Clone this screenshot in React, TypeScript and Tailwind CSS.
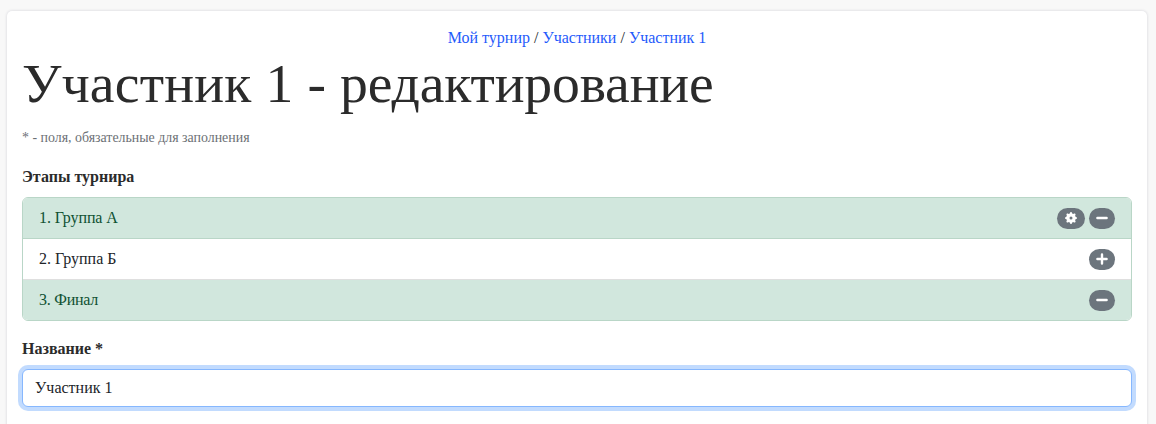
import React from "react";

const Gear = () => (
  <svg width="12" height="12" viewBox="0 0 16 16" fill="currentColor">
    <path d="M9.405 1.05c-.413-1.4-2.397-1.4-2.81 0l-.1.34a1.464 1.464 0 0 1-2.105.872l-.31-.17c-1.283-.698-2.686.705-1.987 1.987l.169.311c.446.82.023 1.841-.872 2.105l-.34.1c-1.4.413-1.4 2.397 0 2.81l.34.1a1.464 1.464 0 0 1 .872 2.105l-.17.31c-.698 1.283.705 2.686 1.987 1.987l.311-.169a1.464 1.464 0 0 1 2.105.872l.1.34c.413 1.4 2.397 1.4 2.81 0l.1-.34a1.464 1.464 0 0 1 2.105-.872l.31.17c1.283.698 2.686-.705 1.987-1.987l-.169-.311a1.464 1.464 0 0 1 .872-2.105l.34-.1c1.4-.413 1.4-2.397 0-2.81l-.34-.1a1.464 1.464 0 0 1-.872-2.105l.17-.31c.698-1.283-.705-2.686-1.987-1.987l-.311.169a1.464 1.464 0 0 1-2.105-.872l-.1-.34zM8 10a2 2 0 1 1 0-4 2 2 0 0 1 0 4z" />
  </svg>
);
const Minus = () => (
  <svg width="14" height="14" viewBox="0 0 14 14"><path d="M2.4 7h9.2" stroke="currentColor" strokeWidth="2.4" strokeLinecap="round" /></svg>
);
const Plus = () => (
  <svg width="14" height="14" viewBox="0 0 14 14"><path d="M2.4 7h9.2M7 2.4v9.2" stroke="currentColor" strokeWidth="2.4" strokeLinecap="round" /></svg>
);

const Pill = ({ children, wide }: { children: React.ReactNode; wide?: boolean }) => (
  <span className={wide ? "flex h-[21px] w-[28px] items-center justify-center rounded-[10.5px] bg-[#6c757d] text-white" : "flex h-[21px] w-[26px] items-center justify-center rounded-[10.5px] bg-[#6c757d] text-white"}>{children}</span>
);

export default function App() {
  return (
    <div className="h-[424px] overflow-hidden bg-[#f8f8f8] pt-[11px] pr-[9px] pl-[7px] font-['Liberation_Serif',serif] text-[16px] leading-[24px] text-[#212529]">
      <div className="h-[600px] rounded-[5px] bg-white px-[15px] pt-[15px] shadow-[0_0_3px_rgba(40,40,70,0.18)]">
        <div className="text-center text-[16px] leading-[24px]">
          <a className="text-[#1f5bfb]">Мой турнир</a> / <a className="text-[#1f5bfb]">Участники</a> / <a className="text-[#1f5bfb]">Участник 1</a>
        </div>
        <h1 className="mb-[8px] text-[55.7px] leading-[67px] font-normal text-[#2b2b2b]">
          <span className="tracking-[0.2px]">Участник 1</span> - <span className="tracking-[-0.15px]">редактирование</span>
        </h1>
        <div className="mt-[10px] text-[13.9px] leading-[21px] text-[#6c7075]">* - поля, обязательные для заполнения</div>
        <div className="mt-[17px] mb-[8px] font-bold text-[#2b2b2b]">Этапы турнира</div>
        <div className="overflow-hidden rounded-[6px] border border-[#b9d6c7]">
          <div className="flex h-[41px] items-center justify-between border-b border-b-[#b9d6c7] bg-[#d1e7dd] px-[16px] text-[#0f5132]">
            <span className="tracking-[-0.1px]">1. Группа А</span>
            <span className="flex gap-[4px]"><Pill wide><Gear /></Pill><Pill><Minus /></Pill></span>
          </div>
          <div className="flex h-[41px] items-center justify-between border-b border-b-[#dfdfdf] bg-white px-[16px] text-[#212529]">
            <span>2. Группа Б</span>
            <Pill><Plus /></Pill>
          </div>
          <div className="flex h-[40px] items-center justify-between bg-[#d1e7dd] px-[16px] text-[#0f5132]">
            <span className="tracking-[-0.25px]">3. Финал</span>
            <Pill><Minus /></Pill>
          </div>
        </div>
        <div className="mt-[16px] mb-[8px] font-bold text-[#2b2b2b]">Название *</div>
        <input
          readOnly
          value="Участник 1"
          className="block h-[38px] w-full rounded-[6px] border border-[#86b7fe] bg-white px-[12px] text-[16px] text-[#212529] shadow-[0_0_0_4px_rgba(13,110,253,0.25)] outline-none"
        />
      </div>
    </div>
  );
}
